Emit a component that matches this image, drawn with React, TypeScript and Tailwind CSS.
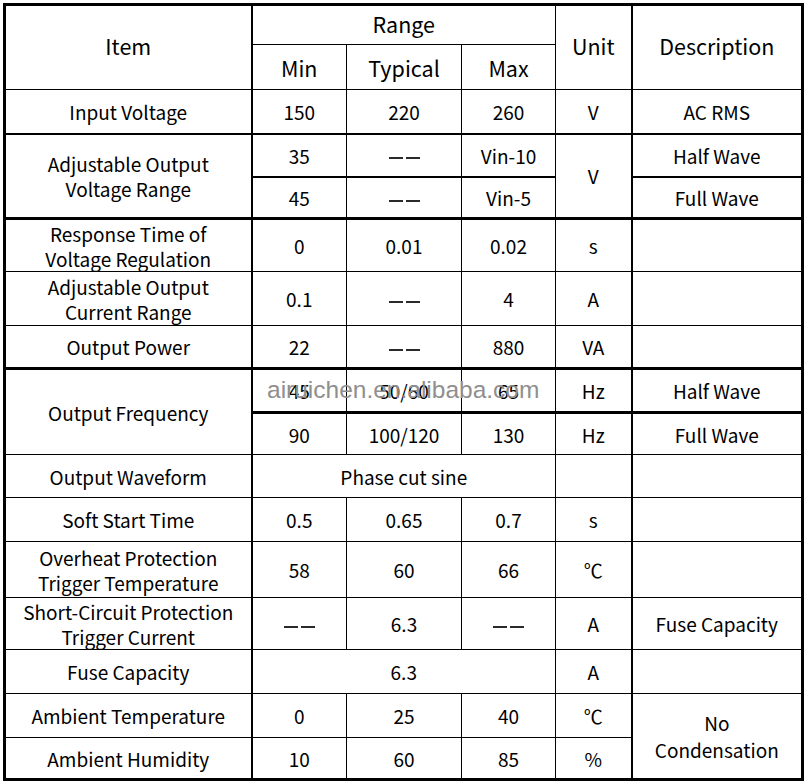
import React from "react";

const F = { fontFamily: '"Noto Sans CJK SC", "Noto Sans", sans-serif' };

const Dash = () => (
  <span className="inline-flex items-center gap-[3px] align-middle">
    <span className="inline-block w-[14px] h-[2px] bg-[#2a2a2a]" />
    <span className="inline-block w-[14px] h-[2px] bg-[#2a2a2a]" />
  </span>
);

export default function App() {
  const td = "border border-black text-center align-middle p-0 leading-[25px]";
  const th = "text-[21.5px]";
  return (
    <div className="w-[807px] h-[781px] bg-white relative overflow-hidden text-black" style={F}>
      <div className="pt-[3px] pl-[3px]">
        <table className="table-fixed border-collapse w-[798px] border-[3px] border-black text-[19px]">
          <colgroup>
            <col className="w-[247px]" />
            <col className="w-[95px]" />
            <col className="w-[115px]" />
            <col className="w-[94px]" />
            <col className="w-[76px]" />
            <col className="w-[171px]" />
          </colgroup>
          <tbody>
            <tr className="h-[40px]">
              <td rowSpan={2} className={`${td} ${th} border-r-2 pb-[4px]`}>Item</td>
              <td colSpan={3} className={`${td} ${th} pb-[4px]`}>Range</td>
              <td rowSpan={2} className={`${td} ${th} pb-[4px]`}>Unit</td>
              <td rowSpan={2} className={`${td} ${th} border-l-2 pb-[4px]`}>Description</td>
            </tr>
            <tr className="h-[45px]">
              <td className={`${td} ${th}`}>Min</td>
              <td className={`${td} ${th}`}>Typical</td>
              <td className={`${td} ${th}`}>Max</td>
            </tr>
            <tr className="h-[44px]">
              <td className={`${td} border-r-2`}>Input Voltage</td>
              <td className={td}>150</td>
              <td className={td}>220</td>
              <td className={td}>260</td>
              <td className={td}>V</td>
              <td className={`${td} border-l-2`}>AC RMS</td>
            </tr>
            <tr className="h-[43px]">
              <td rowSpan={2} className={`${td} border-r-2 border-t-2 border-b-[3px]`}>Adjustable Output<br />Voltage Range</td>
              <td className={`${td} border-t-2 border-b-2`}>35</td>
              <td className={`${td} border-t-2 border-b-2`}><Dash /></td>
              <td className={`${td} border-t-2 border-b-2`}>Vin-10</td>
              <td rowSpan={2} className={`${td} border-t-2 border-b-[3px]`}>V</td>
              <td className={`${td} border-l-2 border-t-2 border-b-2`}>Half Wave</td>
            </tr>
            <tr className="h-[42px]">
              <td className={`${td} border-b-[3px]`}>45</td>
              <td className={`${td} border-b-[3px]`}><Dash /></td>
              <td className={`${td} border-b-[3px]`}>Vin-5</td>
              <td className={`${td} border-l-2 border-b-[3px]`}>Full Wave</td>
            </tr>
            <tr className="h-[53px]">
              <td className={`${td} border-r-2`}>Response Time of<br />Voltage Regulation</td>
              <td className={td}>0</td>
              <td className={td}>0.01</td>
              <td className={td}>0.02</td>
              <td className={td}>s</td>
              <td className={`${td} border-l-2`}></td>
            </tr>
            <tr className="h-[54px]">
              <td className={`${td} border-r-2`}>Adjustable Output<br />Current Range</td>
              <td className={td}>0.1</td>
              <td className={td}><Dash /></td>
              <td className={td}>4</td>
              <td className={td}>A</td>
              <td className={`${td} border-l-2`}></td>
            </tr>
            <tr className="h-[43px]">
              <td className={`${td} border-r-2 border-b-[3px]`}>Output Power</td>
              <td className={`${td} border-b-[3px]`}>22</td>
              <td className={`${td} border-b-[3px]`}><Dash /></td>
              <td className={`${td} border-b-[3px]`}>880</td>
              <td className={`${td} border-b-[3px]`}>VA</td>
              <td className={`${td} border-l-2 border-b-[3px]`}></td>
            </tr>
            <tr className="h-[44px]">
              <td rowSpan={2} className={`${td} border-r-2`}>Output Frequency</td>
              <td className={`${td} border-b-[3px]`}>45</td>
              <td className={`${td} border-b-[3px]`}>50/60</td>
              <td className={`${td} border-b-[3px]`}>65</td>
              <td className={`${td} border-b-[3px]`}>Hz</td>
              <td className={`${td} border-l-2 border-b-[3px]`}>Half Wave</td>
            </tr>
            <tr className="h-[42px]">
              <td className={td}>90</td>
              <td className={td}>100/120</td>
              <td className={td}>130</td>
              <td className={td}>Hz</td>
              <td className={`${td} border-l-2`}>Full Wave</td>
            </tr>
            <tr className="h-[43px]">
              <td className={`${td} border-r-2`}>Output Waveform</td>
              <td colSpan={3} className={td}>Phase cut sine</td>
              <td className={td}></td>
              <td className={`${td} border-l-2`}></td>
            </tr>
            <tr className="h-[44px]">
              <td className={`${td} border-r-2`}>Soft Start Time</td>
              <td className={td}>0.5</td>
              <td className={td}>0.65</td>
              <td className={td}>0.7</td>
              <td className={td}>s</td>
              <td className={`${td} border-l-2`}></td>
            </tr>
            <tr className="h-[56px]">
              <td className={`${td} border-r-2`}>Overheat Protection<br />Trigger Temperature</td>
              <td className={td}>58</td>
              <td className={td}>60</td>
              <td className={td}>66</td>
              <td className={td}>℃</td>
              <td className={`${td} border-l-2`}></td>
            </tr>
            <tr className="h-[52px]">
              <td className={`${td} border-r-2`}>Short-Circuit Protection<br />Trigger Current</td>
              <td className={td}><Dash /></td>
              <td className={td}>6.3</td>
              <td className={td}><Dash /></td>
              <td className={td}>A</td>
              <td className={`${td} border-l-2`}>Fuse Capacity</td>
            </tr>
            <tr className="h-[44px]">
              <td className={`${td} border-r-2`}>Fuse Capacity</td>
              <td colSpan={3} className={td}>6.3</td>
              <td className={td}>A</td>
              <td className={`${td} border-l-2`}></td>
            </tr>
            <tr className="h-[44px]">
              <td className={`${td} border-r-2`}>Ambient Temperature</td>
              <td className={td}>0</td>
              <td className={td}>25</td>
              <td className={td}>40</td>
              <td className={td}>℃</td>
              <td rowSpan={2} className={`${td} border-l-2 leading-[27px]`}>No<br />Condensation</td>
            </tr>
            <tr className="h-[42px]">
              <td className={`${td} border-r-2`}>Ambient Humidity</td>
              <td className={td}>10</td>
              <td className={td}>60</td>
              <td className={td}>85</td>
              <td className={td}>%</td>
            </tr>
          </tbody>
        </table>
      </div>
      <div
        className="absolute left-[267px] top-[376px] text-[24.5px] leading-[28px] text-[#8f8f8f] pointer-events-none"
        style={{ fontFamily: '"Liberation Sans", Arial, sans-serif' }}
      >
        airuichen.en.alibaba.com
      </div>
    </div>
  );
}
